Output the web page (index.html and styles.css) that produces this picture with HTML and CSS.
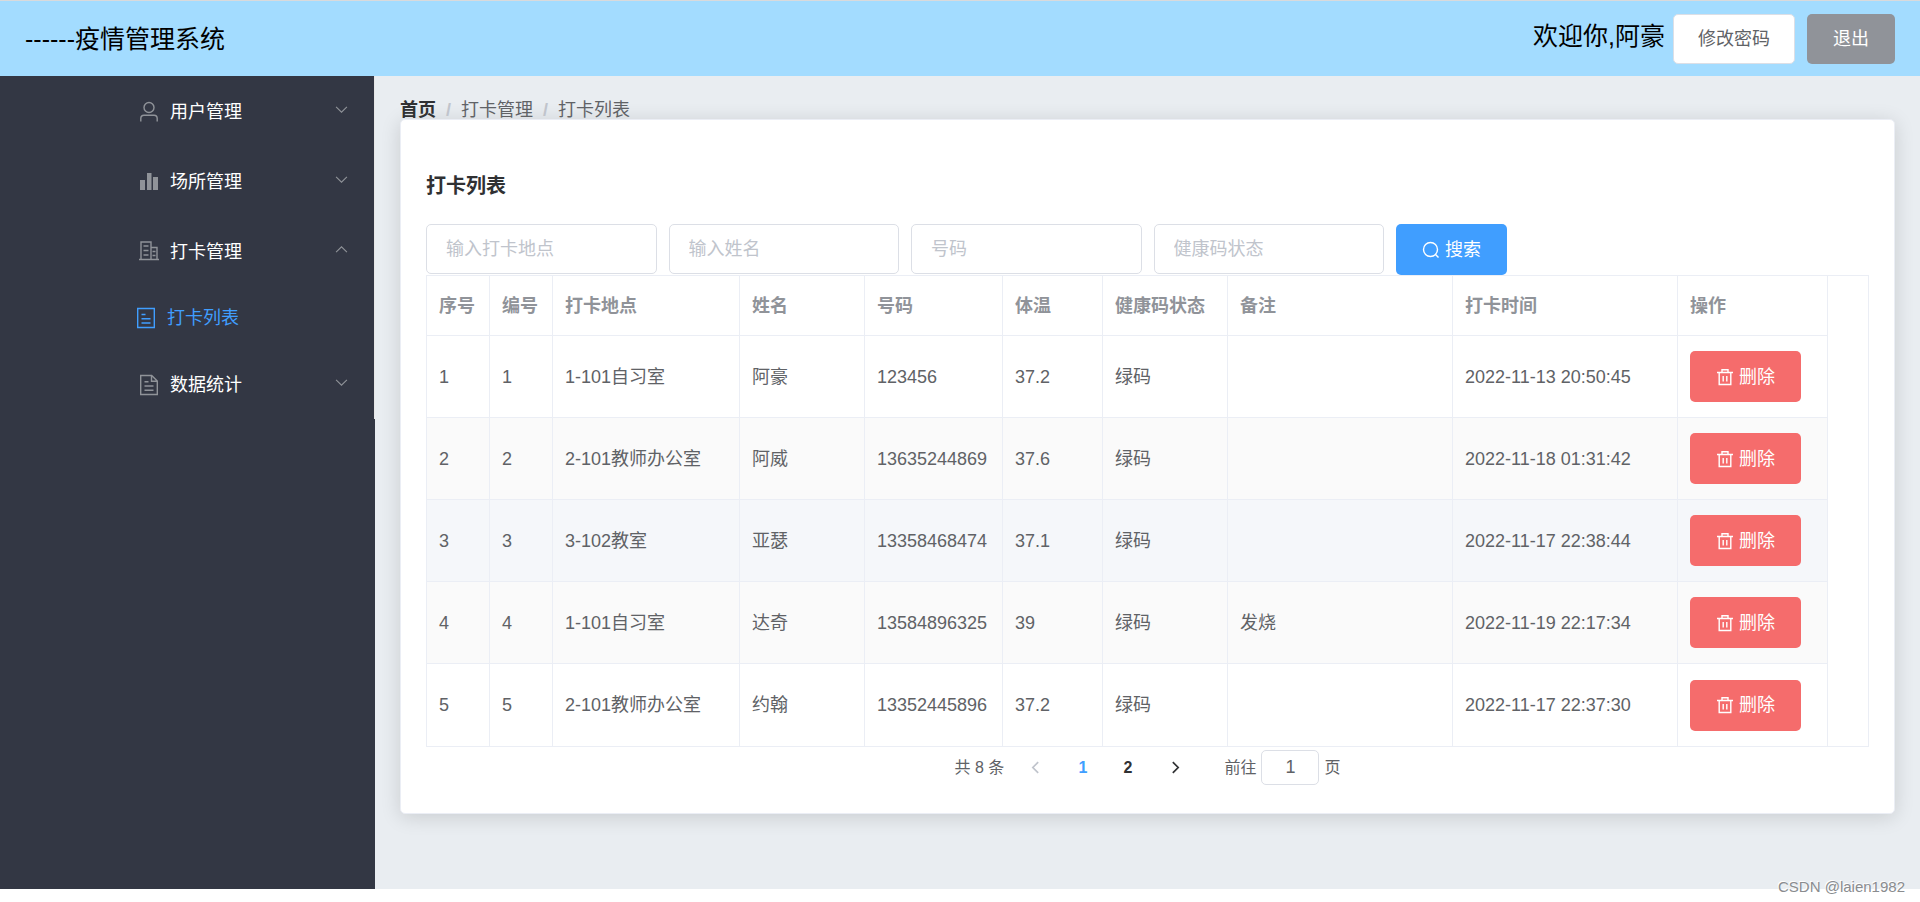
FILE: index.html
```html
<!DOCTYPE html>
<html lang="zh-CN">
<head>
<meta charset="UTF-8">
<meta name="viewport" content="width=device-width, initial-scale=1">
<title>疫情管理系统</title>
<link rel="stylesheet" href="styles.css">
</head>
<body>
<svg class="sprite" aria-hidden="true">
  <symbol id="arrow" viewBox="0 0 12 12"><path d="M1 3.5l5 5 5-5" fill="none" stroke="currentColor" stroke-width="1"/></symbol>
  <symbol id="trash" viewBox="0 0 18 18"><path d="M1 4.5h16M6 4V1.7h6V4M3.2 4.5v12h11.6v-12M7.2 8v5.5M10.8 8v5.5" fill="none" stroke="currentColor" stroke-width="1.4"/></symbol>
</svg>
<header class="header">
  <div class="brand">------疫情管理系统</div>
  <div class="account">
    <span class="welcome">欢迎你,阿豪</span>
    <button class="btn btn-plain" type="button">修改密码</button>
    <button class="btn btn-info" type="button">退出</button>
  </div>
</header>
<div class="layout">
  <aside class="sidebar">
    <nav class="menu">
      <button class="menu-item" type="button">
        <svg class="menu-icon" viewBox="0 0 22 22"><circle cx="11" cy="6.500" r="5"/><path d="M2.800 20.500v-3q0-3.200 3.200-3.200h10q3.200 0 3.200 3.200v3"/></svg>
        <span>用户管理</span>
        <svg class="menu-arrow"><use href="#arrow"/></svg>
      </button>
      <button class="menu-item" type="button">
        <svg class="menu-icon menu-icon-solid" viewBox="0 0 22 22"><path d="M2 9h5v10H2zM9 2h4.500v17H9zM15 6h5v13h-5z"/></svg>
        <span>场所管理</span>
        <svg class="menu-arrow"><use href="#arrow"/></svg>
      </button>
      <button class="menu-item" type="button" aria-expanded="true">
        <svg class="menu-icon" viewBox="0 0 22 22"><path d="M1 18.500h20M3 18V1h10v17M13 6.500h6V18M5.500 5h5M5.500 9.500h5M5.500 14h5M14.500 10.500h3M14.500 14.500h3"/></svg>
        <span>打卡管理</span>
        <svg class="menu-arrow menu-arrow-open"><use href="#arrow"/></svg>
      </button>
      <a class="menu-item menu-sub" href="#" aria-current="page">
        <svg class="menu-icon" viewBox="0 0 22 22"><path d="M2.700 1.500h16.600v19H2.700zM6.500 7.500h4M6.500 11.800h9M6.500 16h9"/></svg>
        <span>打卡列表</span>
      </a>
      <button class="menu-item" type="button">
        <svg class="menu-icon" viewBox="0 0 22 22"><path d="M2.700 1.500h11l5.600 5.600v13.400H2.700zM13.500 1.500V7.300h5.800M6.500 7.800h4M6.500 12h9M6.500 16.200h9"/></svg>
        <span>数据统计</span>
        <svg class="menu-arrow"><use href="#arrow"/></svg>
      </button>
    </nav>
  </aside>
  <main class="main">
    <nav class="breadcrumb" aria-label="breadcrumb">
      <a class="crumb-home" href="#">首页</a><span class="slash">/</span><span>打卡管理</span><span class="slash">/</span><span>打卡列表</span>
    </nav>
    <section class="card">
      <h3 class="card-title">打卡列表</h3>
      <form class="search">
        <input class="input" type="text" placeholder="输入打卡地点" aria-label="输入打卡地点">
        <input class="input" type="text" placeholder="输入姓名" aria-label="输入姓名">
        <input class="input" type="text" placeholder="号码" aria-label="号码">
        <input class="input" type="text" placeholder="健康码状态" aria-label="健康码状态">
        <button class="btn btn-primary" type="button"><svg class="btn-icon" viewBox="0 0 18 18"><circle cx="8.500" cy="8.500" r="7" fill="none" stroke="currentColor" stroke-width="1.400"/><path d="M13.300 13.300l3.200 3.200" stroke="currentColor" stroke-width="1.400"/></svg>搜索</button>
      </form>
      <div class="table-box">
        <table class="table">
          <colgroup><col class="w-index"><col class="w-index"><col class="w-place"><col class="w-name"><col class="w-phone"><col class="w-temp"><col class="w-name"><col class="w-wide"><col class="w-wide"><col class="w-action"></colgroup>
          <thead>
            <tr><th>序号</th><th>编号</th><th>打卡地点</th><th>姓名</th><th>号码</th><th>体温</th><th>健康码状态</th><th>备注</th><th>打卡时间</th><th>操作</th></tr>
          </thead>
          <tbody>
            <tr><td>1</td><td>1</td><td>1-101自习室</td><td>阿豪</td><td>123456</td><td>37.2</td><td>绿码</td><td></td><td>2022-11-13 20:50:45</td><td><button class="btn btn-danger" type="button"><svg class="btn-icon"><use href="#trash"/></svg>删除</button></td></tr>
            <tr class="striped"><td>2</td><td>2</td><td>2-101教师办公室</td><td>阿威</td><td>13635244869</td><td>37.6</td><td>绿码</td><td></td><td>2022-11-18 01:31:42</td><td><button class="btn btn-danger" type="button"><svg class="btn-icon"><use href="#trash"/></svg>删除</button></td></tr>
            <tr class="current"><td>3</td><td>3</td><td>3-102教室</td><td>亚瑟</td><td>13358468474</td><td>37.1</td><td>绿码</td><td></td><td>2022-11-17 22:38:44</td><td><button class="btn btn-danger" type="button"><svg class="btn-icon"><use href="#trash"/></svg>删除</button></td></tr>
            <tr class="striped"><td>4</td><td>4</td><td>1-101自习室</td><td>达奇</td><td>13584896325</td><td>39</td><td>绿码</td><td>发烧</td><td>2022-11-19 22:17:34</td><td><button class="btn btn-danger" type="button"><svg class="btn-icon"><use href="#trash"/></svg>删除</button></td></tr>
            <tr><td>5</td><td>5</td><td>2-101教师办公室</td><td>约翰</td><td>13352445896</td><td>37.2</td><td>绿码</td><td></td><td>2022-11-17 22:37:30</td><td><button class="btn btn-danger" type="button"><svg class="btn-icon"><use href="#trash"/></svg>删除</button></td></tr>
          </tbody>
        </table>
      </div>
      <div class="pagination">
        <span class="total">共 8 条</span>
        <button class="page-btn" type="button" disabled aria-label="上一页"><svg class="page-arrow" viewBox="0 0 14 14"><path d="M9.500 2L4.500 7l5 5"/></svg></button>
        <button class="page-num page-active" type="button">1</button>
        <button class="page-num" type="button">2</button>
        <button class="page-btn" type="button" aria-label="下一页"><svg class="page-arrow" viewBox="0 0 14 14"><path d="M4.500 2l5 5-5 5"/></svg></button>
        <label class="jump">前往<input class="jump-input" type="text" value="1">页</label>
      </div>
    </section>
  </main>
</div>
<div class="watermark">CSDN @laien1982</div>
</body>
</html>
```
FILE: styles.css
```css
* { box-sizing: border-box; }

body {
  position: relative;
  min-height: 100vh;
  margin: 0;
  background: #fff;
  color: #606266;
  font: 18px/24px "Liberation Sans", "Noto Sans CJK SC", sans-serif;
}

button, input { font: inherit; }
button { cursor: pointer; }
a { color: inherit; text-decoration: none; }
.sprite { display: none; }

.header {
  display: flex;
  align-items: center;
  justify-content: space-between;
  height: 76px;
  padding: 0 25px;
  border-top: 1px solid #d9dadc;
  background: #a3dcff;
  color: #000;
  font-size: 25px;
  line-height: 34px;
}
.account { display: flex; align-items: baseline; }
.welcome { margin-right: 8px; }

.btn {
  display: inline-flex;
  align-items: center;
  justify-content: center;
  gap: 5px;
  height: 51px;
  padding: 0 25px;
  border: 1px solid transparent;
  border-radius: 5px;
  color: #fff;
  font-size: 18px;
  line-height: 18px;
}
.btn-icon { width: 18px; height: 18px; }
.btn-plain {
  height: 50px;
  margin-right: 12px;
  padding: 0 24px;
  border-color: #dcdfe6;
  background: #fff;
  color: #606266;
}
.btn-info { height: 50px; background: #909399; }
.btn-primary { justify-self: start; background: #409eff; }
.btn-danger { background: #f56c6c; }

.layout { display: flex; align-items: stretch; }
.sidebar { flex: none; width: 375px; background: #333744; }
.menu { border-right: 1px solid #e6e6e6; }
.menu-item {
  position: relative;
  display: flex;
  align-items: center;
  justify-content: center;
  gap: 10px;
  width: 100%;
  height: 70px;
  padding: 1px 0 0 6px;
  border: 0;
  background: none;
  color: #fff;
}
.menu-icon {
  width: 22px;
  height: 22px;
  fill: none;
  stroke: #909399;
  stroke-width: 1.4;
}
.menu-icon-solid { fill: #909399; stroke: none; }
.menu-arrow {
  position: absolute;
  top: 27px;
  right: 26px;
  width: 13px;
  height: 13px;
  color: #909399;
}
.menu-arrow-open { transform: rotate(180deg); }
.menu-sub { height: 63px; padding: 1px 0 0; color: #409eff; }
.menu-sub .menu-icon { stroke: #409eff; }

.main {
  flex: 1;
  min-width: 0;
  padding: 25px 25px 75px;
  background: #e9edf1;
}
.breadcrumb { display: flex; line-height: 18px; }
.crumb-home { color: #303133; font-weight: 700; }
.slash { margin: 0 10px; color: #c0c4cc; font-weight: 700; }

.card {
  padding: 25px;
  border: 1px solid #ebeef5;
  border-radius: 5px;
  background: #fff;
  box-shadow: 0 3px 20px rgba(0, 0, 0, 0.14);
}
.card-title {
  margin: 28px 0 25px;
  color: #303133;
  font-size: 20px;
  line-height: 26px;
}
.search {
  display: grid;
  grid-template-columns: repeat(6, 1fr);
  gap: 12px;
}
.input {
  width: 100%;
  min-width: 0;
  height: 50px;
  padding: 0 19px;
  border: 1px solid #dcdfe6;
  border-radius: 5px;
  background: #fff;
  color: #606266;
}
.input::placeholder { color: #c0c4cc; }

.table-box { overflow-x: auto; border: 1px solid #ebeef5; }
.table {
  width: 1401px;
  border-spacing: 0;
  table-layout: fixed;
}
.w-index { width: 63px; }
.w-place { width: 187px; }
.w-name { width: 125px; }
.w-phone { width: 138px; }
.w-temp { width: 100px; }
.w-wide { width: 225px; }
.w-action { width: 150px; }
.table th, .table td {
  height: 82px;
  padding: 0 12px;
  border-right: 1px solid #ebeef5;
  border-bottom: 1px solid #ebeef5;
  text-align: left;
  white-space: nowrap;
}
.table th { height: 60px; color: #909399; }
.table tbody tr:last-child td { border-bottom: 0; }
.table .btn { display: flex; }
.striped { background: #fafafa; }
.current { background: #f5f7fa; }

.pagination {
  display: flex;
  align-items: center;
  justify-content: center;
  padding: 3px 0;
  font-size: 16px;
}
.total { margin-right: 12px; }
.page-btn, .page-num {
  display: flex;
  align-items: center;
  justify-content: center;
  height: 35px;
  padding: 0;
  border: 0;
  background: none;
  color: #303133;
}
.page-btn { width: 38px; }
.page-num { width: 45px; font-weight: 700; }
.page-num + .page-btn { margin: 0 30px 0 6px; }
.page-btn + .page-num { margin-left: 6px; }
.page-active { color: #409eff; }
.page-btn:disabled { color: #c0c4cc; }
.page-arrow {
  width: 15px;
  height: 15px;
  fill: none;
  stroke: currentColor;
  stroke-width: 1.6;
}
.jump { display: flex; align-items: center; }
.jump-input {
  width: 58px;
  height: 35px;
  margin: 0 5px;
  padding: 0 4px;
  border: 1px solid #dcdfe6;
  border-radius: 5px;
  color: #606266;
  font-size: 18px;
  text-align: center;
}

.watermark {
  position: absolute;
  right: 15px;
  bottom: 6px;
  color: #8a8c8f;
  font-size: 15px;
  line-height: 18px;
  text-shadow: -1px -1px 0 #fff;
}
```
